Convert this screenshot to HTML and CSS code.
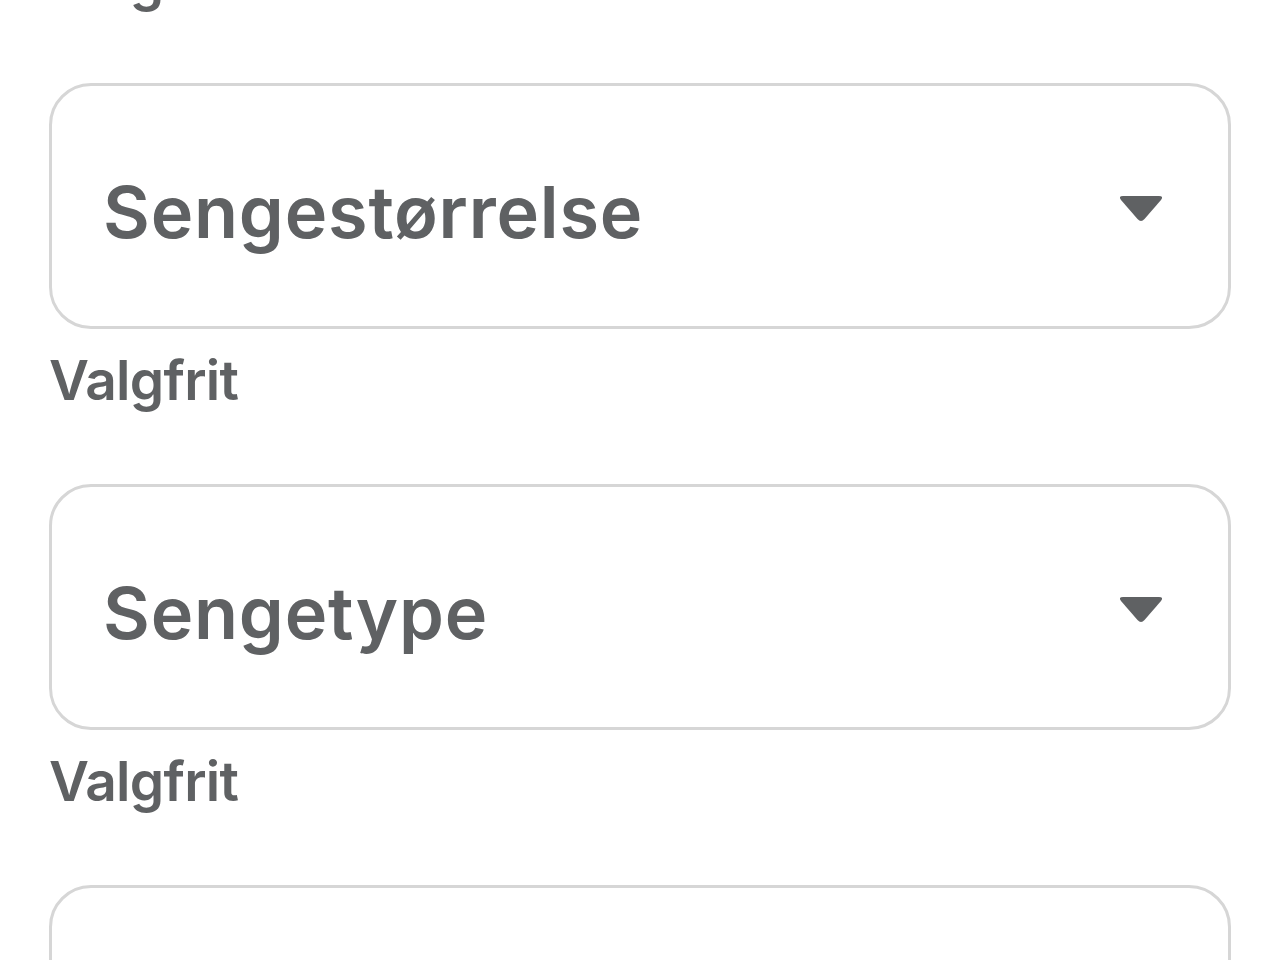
FILE: index.html
```html
<!DOCTYPE html>
<html lang="da">
<head>
<meta charset="utf-8">
<link rel="stylesheet" href="styles.css">
</head>
<body>
<div class="form">
  <div class="helper top-helper">Valgfrit</div>
  <div class="field">
    <div class="select">
      <span class="label">Sengestørrelse</span>
      <svg class="caret" width="48" height="30" viewBox="0 0 48 30"><path d="M6 2 H42 Q47 2 44 6 L27.5 25 Q24 29 20.5 25 L4 6 Q1 2 6 2 Z" fill="#5f6163"/></svg>
    </div>
    <div class="helper">Valgfrit</div>
  </div>
  <div class="field">
    <div class="select">
      <span class="label">Sengetype</span>
      <svg class="caret" width="48" height="30" viewBox="0 0 48 30"><path d="M6 2 H42 Q47 2 44 6 L27.5 25 Q24 29 20.5 25 L4 6 Q1 2 6 2 Z" fill="#5f6163"/></svg>
    </div>
    <div class="helper">Valgfrit</div>
  </div>
  <div class="field">
    <div class="select"></div>
  </div>
</div>
</body>
</html>
```
FILE: styles.css
```css
html, body {
  margin: 0;
  padding: 0;
  background: #fff;
  height: 960px;
  overflow: hidden;
}
.form {
  display: flex;
  flex-direction: column;
  gap: 70px;
  padding: 0 49px;
  margin-top: -53px;
  font-family: Inter, "Liberation Sans", sans-serif;
  color: #5f6163;
}
.field {
  display: flex;
  flex-direction: column;
  gap: 18px;
}
.field + .field {
  margin-top: 1px;
}
.select {
  box-sizing: border-box;
  height: 246px;
  border: 3px solid #d6d6d6;
  border-radius: 42px;
  display: flex;
  align-items: center;
  justify-content: space-between;
  padding: 10px 63px 0 51px;
  flex-shrink: 0;
}
.label {
  font-size: 72px;
  font-weight: 600;
  letter-spacing: 0.8px;
}
.caret {
  display: block;
  margin-top: -4px;
}
.helper {
  font-size: 55px;
  font-weight: 600;
  line-height: 66px;
  letter-spacing: -0.7px;
}
.top-helper {
  margin-left: 0;
}
```
